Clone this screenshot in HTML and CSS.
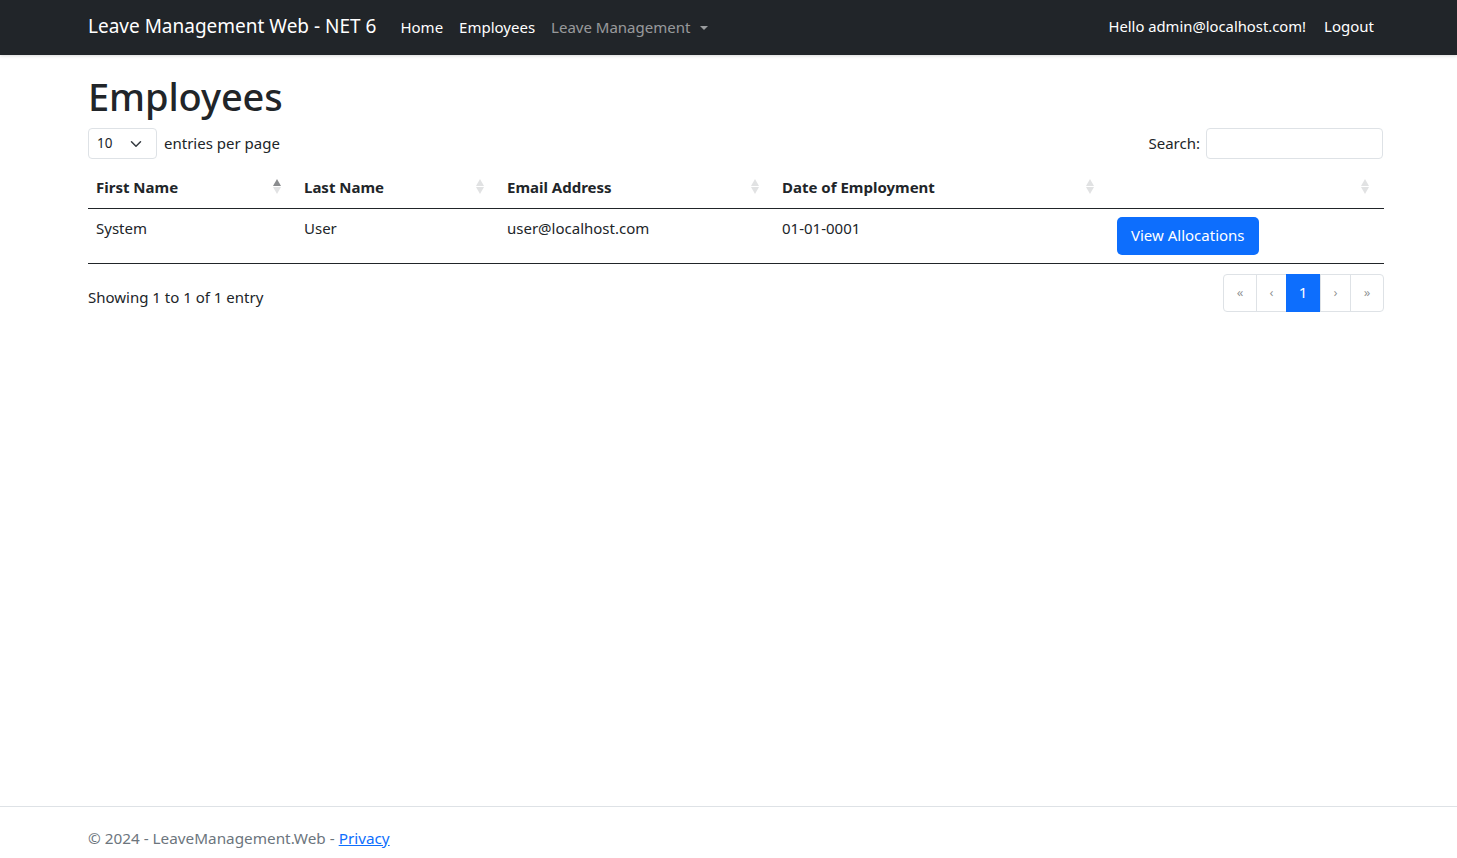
FILE: index.html
```html
<!DOCTYPE html>
<html lang="en">
<head>
<meta charset="utf-8">
<title>Employees - LeaveManagement.Web</title>
<link rel="stylesheet" href="styles.css">
</head>
<body>
<div class="page">
  <header class="navbar">
    <div class="nav-inner">
      <a class="brand" href="#">Leave Management Web - NET 6</a>
      <nav class="nav-left">
        <a class="nav-link" href="#">Home</a>
        <a class="nav-link" href="#">Employees</a>
        <a class="nav-link muted dropdown" href="#">Leave Management<span class="caret"></span></a>
      </nav>
      <nav class="nav-right">
        <span class="nav-link">Hello admin@localhost.com!</span>
        <a class="nav-link" href="#">Logout</a>
      </nav>
    </div>
  </header>

  <main class="main">
    <h1 class="title">Employees</h1>
    <div class="dt-top">
      <div class="length">
        <div class="select">
          <span>10</span>
          <svg width="12" height="12" viewBox="0 0 16 16"><path d="M2 5l6 6 6-6" fill="none" stroke="#343a40" stroke-width="2" stroke-linecap="round" stroke-linejoin="round"/></svg>
        </div>
        <span class="length-label">entries per page</span>
      </div>
      <div class="search">
        <label>Search:</label>
        <div class="search-input"></div>
      </div>
    </div>

    <table class="table">
      <colgroup>
        <col class="c1"><col class="c2"><col class="c3"><col class="c4"><col class="c5">
      </colgroup>
      <thead>
        <tr>
          <th>First Name<span class="order"><span class="up active"></span><span class="down"></span></span></th>
          <th>Last Name<span class="order"><span class="up"></span><span class="down"></span></span></th>
          <th>Email Address<span class="order"><span class="up"></span><span class="down"></span></span></th>
          <th>Date of Employment<span class="order"><span class="up"></span><span class="down"></span></span></th>
          <th><span class="order"><span class="up"></span><span class="down"></span></span></th>
        </tr>
      </thead>
      <tbody>
        <tr>
          <td>System</td>
          <td>User</td>
          <td>user@localhost.com</td>
          <td>01-01-0001</td>
          <td><a class="btn" href="#">View Allocations</a></td>
        </tr>
      </tbody>
    </table>

    <div class="dt-bottom">
      <div class="info">Showing 1 to 1 of 1 entry</div>
      <ul class="pagination">
        <li class="pg disabled w32">«</li>
        <li class="pg disabled w30">‹</li>
        <li class="pg current w34">1</li>
        <li class="pg disabled w30">›</li>
        <li class="pg disabled w33">»</li>
      </ul>
    </div>
  </main>

  <footer class="footer">
    <div class="footer-inner">© 2024 - LeaveManagement.Web - <a href="#">Privacy</a></div>
  </footer>
</div>
</body>
</html>
```

FILE: styles.css
```css
* { box-sizing: border-box; }
html, body { margin: 0; padding: 0; }
body {
  font-family: "Noto Sans", "Open Sans", sans-serif;
  font-size: 15px;
  line-height: 1.5;
  color: #212529;
  background: #fff;
}
a { text-decoration: none; color: inherit; }

.page {
  height: 858px;
  display: flex;
  flex-direction: column;
  overflow: hidden;
}

/* Navbar */
.navbar {
  height: 55px;
  background: #212529;
  box-shadow: 0 1px 3px rgba(0,0,0,.15);
  flex: none;
}
.nav-inner {
  margin-left: 88px;
  width: 1296px;
  height: 55px;
  display: flex;
  align-items: center;
  padding-bottom: 2px;
}
.brand {
  color: #fff;
  font-size: 19px;
  margin-right: 16px;
}
.nav-left, .nav-right { display: flex; align-items: center; }
.nav-left { padding-top: 1px; }
.nav-right { margin-left: auto; }
.nav-link {
  color: #fff;
  font-size: 15px;
  padding: 8px;
}
.nav-right .nav-link:first-child { font-size: 14.8px; margin-right: 2px; }
.nav-right .nav-link:last-child { padding-right: 10px; }
.nav-link.muted { color: rgba(255,255,255,.55); }
.caret {
  display: inline-block;
  margin-left: 10px;
  vertical-align: 3px;
  border-top: 4.5px solid rgba(255,255,255,.55);
  border-left: 4px solid transparent;
  border-right: 4px solid transparent;
}

/* Main */
.main {
  flex: 1;
  margin-left: 88px;
  width: 1296px;
  padding-top: 18px;
}
.title {
  margin: 0 0 9px;
  font-size: 38px;
  font-weight: 500;
  line-height: 46px;
  letter-spacing: -0.1px;
}
.dt-top {
  display: flex;
  justify-content: space-between;
  align-items: center;
  height: 31px;
}
.length { display: flex; align-items: center; }
.select {
  width: 69px;
  height: 31px;
  border: 1px solid #dee2e6;
  border-radius: 4px;
  display: flex;
  align-items: center;
  justify-content: space-between;
  padding: 0 14px 0 8px;
  font-size: 13.5px;
}
.length-label { margin-left: 7px; font-size: 15px; }
.search { display: flex; align-items: center; }
.search label { font-size: 15px; margin-right: 6px; }
.search-input {
  width: 177px;
  height: 31px;
  border: 1px solid #dee2e6;
  border-radius: 4px;
  margin-right: 1px;
}

.table {
  width: 1296px;
  border-collapse: collapse;
  table-layout: fixed;
  margin-top: 8px;
}
col.c1 { width: 208px; }
col.c2 { width: 203px; }
col.c3 { width: 275px; }
col.c4 { width: 335px; }
col.c5 { width: 275px; }
.table th {
  text-align: left;
  font-weight: 700;
  font-size: 15px;
  padding: 8px;
  height: 41px;
  border-bottom: 1px solid #212529;
  position: relative;
  white-space: nowrap;
}
.order {
  position: absolute;
  right: 15px;
  top: 12px;
  width: 8px;
  display: flex;
  flex-direction: column;
  align-items: center;
  gap: 1px;
}
.order .up {
  width: 0; height: 0;
  border-left: 4px solid transparent;
  border-right: 4px solid transparent;
  border-bottom: 7px solid #e1e2e3;
}
.order .down {
  width: 0; height: 0;
  border-left: 4px solid transparent;
  border-right: 4px solid transparent;
  border-top: 7px solid #e1e2e3;
}
.order .up.active { border-bottom-color: #8a8c8e; }
.table td {
  padding: 8px;
  height: 55px;
  vertical-align: top;
  font-size: 15px;
  border-bottom: 1px solid #212529;
}
.btn {
  display: inline-block;
  background: #0d6efd;
  color: #fff;
  border-radius: 5px;
  padding: 5px 14px 7px;
  font-size: 15px;
  line-height: 26px;
  height: 38px;
}

.dt-bottom {
  display: flex;
  justify-content: space-between;
  align-items: flex-start;
  margin-top: 10px;
}
.info { font-size: 15px; padding-top: 12px; }
.pagination {
  list-style: none;
  margin: 0;
  padding: 0;
  display: flex;
  border: 1px solid #dee2e6;
  border-radius: 4px;
  height: 38px;
}
.pg {
  height: 36px;
  display: flex;
  align-items: center;
  justify-content: center;
  font-size: 13px;
  color: rgba(33,37,41,.5);
  border-left: 1px solid #dee2e6;
}
.pg:first-child { border-left: none; }
.pg.current {
  background: #0d6efd;
  color: #fff;
  font-size: 15px;
  margin: -1px 0;
  height: 38px;
  border-left: none;
}
.w32 { width: 32px; }
.w33 { width: 33px; }
.w30 { width: 30px; }
.w34 { width: 34px; }

/* Footer */
.footer {
  flex: none;
  height: 52px;
  border-top: 1px solid #dee2e6;
  overflow: hidden;
}
.footer-inner {
  margin-left: 88px;
  line-height: 62px;
  color: #6c757d;
  font-size: 15.3px;
  white-space: nowrap;
}
.footer-inner a { color: #0d6efd; text-decoration: underline; }
```
